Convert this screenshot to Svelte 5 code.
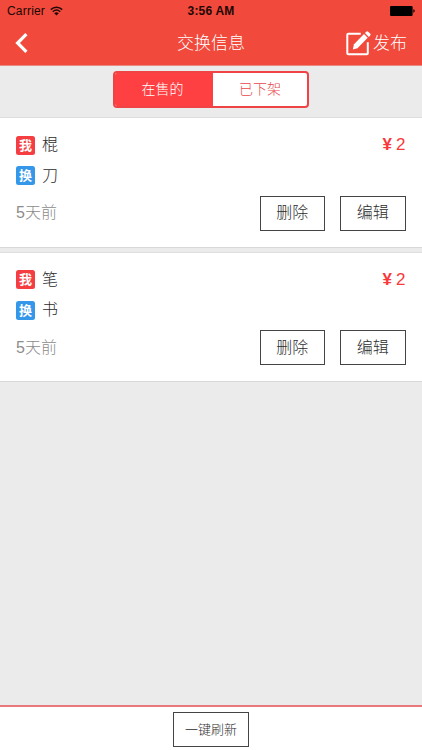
<script>
	// VARIABLES

	let tabs = ["在售的", "已下架"];
	let active = 0;

	let items = [
		{ id: 1, mine: "棍", wanted: "刀", price: 2, createdAt: "5天前" },
		{ id: 2, mine: "笔", wanted: "书", price: 2, createdAt: "5天前" },
	];

	// FUNCTIONS

	function remove(id) {
		items = items.filter((item) => item.id !== id);
	}
</script>

<div class="screen">
	<header>
		<div class="status">
			<div class="carrier">
				<span>Carrier</span>
				<svg width="13" height="10" viewBox="0 0 13 10">
					<path
						d="M.8 3.6C4 .5 9 .5 12.2 3.6M2.8 5.7C5 3.7 8 3.7 10.2 5.7"
						fill="none"
						stroke="#200806"
						stroke-width="1.5"
					/>
					<path d="M4.2 7.2Q6.5 5.4 8.8 7.2L6.5 9.6Z" fill="#200806" />
				</svg>
			</div>
			<span class="time">3:56 AM</span>
			<div class="power">
				<svg width="25" height="10" viewBox="0 0 25 10">
					<rect width="22.6" height="10" rx="1.2" />
					<path d="M23.3 3.3Q24.7 3.6 24.7 5T23.3 6.7Z" />
				</svg>
			</div>
		</div>
		<nav>
			<button class="back" aria-label="返回">
				<svg width="13" height="20" viewBox="0 0 13 20">
					<path d="M11.4 1.2L2.6 10L11.4 18.8" fill="none" stroke="#fff" stroke-width="3.2" />
				</svg>
			</button>
			<h1>交换信息</h1>
			<button class="publish">
				<svg width="26" height="25" viewBox="0 0 26 25">
					<path
						d="M14.8 2.8H2.3Q1.3 2.8 1.3 3.8V22.2Q1.3 23.2 2.3 23.2H20.8Q21.8 23.2 21.8 22.2V11.3"
						fill="none"
						stroke="#fff"
						stroke-width="2"
					/>
					<path d="M18 3L21.7 6.8L11.5 17.2L6.8 18.6L8 13.2Z" fill="#fff" />
					<path
						d="M19 2L20.2 .8Q21.3 -.1 22.5 .9L24.1 2.5Q25.1 3.6 24.1 4.7L22.8 5.9Z"
						fill="#fff"
					/>
				</svg>
				<span>发布</span>
			</button>
		</nav>
	</header>

	<div class="tabs">
		{#each tabs as tab, i}
			<button class:active={active === i} on:click={() => (active = i)}>{tab}</button>
		{/each}
	</div>

	<main>
		{#each items as item (item.id)}
			<section class="card">
				<div class="row">
					<i class="tag mine">我</i>
					<span class="name">{item.mine}</span>
					<span class="price"><b>¥</b>{item.price}</span>
				</div>
				<div class="row">
					<i class="tag wanted">换</i>
					<span class="name">{item.wanted}</span>
				</div>
				<div class="row footer">
					<span class="created-at">{item.createdAt}</span>
					<button on:click={() => remove(item.id)}>删除</button>
					<button>编辑</button>
				</div>
			</section>
		{/each}
	</main>

	<footer>
		<button>一键刷新</button>
	</footer>
</div>

<style>
	:global(body) {
		margin: 0;
	}

	.screen {
		height: 750px;
		display: flex;
		flex-direction: column;
		box-sizing: border-box;
		background: #ebebeb;
		color: #2c2c2c;
		font-family: "Liberation Sans", "Noto Sans CJK SC", sans-serif;
		font-weight: 300;
	}

	.screen * {
		box-sizing: border-box;
	}

	button {
		padding: 0;
		border: 0;
		background: none;
		color: inherit;
		font: inherit;
		white-space: nowrap;
	}

	svg {
		display: block;
		overflow: visible;
	}

	header {
		height: 66px;
		background: #f1493b;
		border-bottom: 1px solid #e88a82;
		color: #fff;
	}

	.status {
		height: 22px;
		display: grid;
		grid-template-columns: 1fr auto 1fr;
		align-items: center;
		padding: 0 7px 0 7px;
		color: #200806;
		font-size: 12px;
		line-height: 22px;
	}

	.carrier {
		display: flex;
		align-items: center;
		gap: 5px;
		letter-spacing: 0.2px;
	}

	.time {
		font-weight: bold;
		letter-spacing: 0.2px;
	}

	.power {
		justify-self: end;
		fill: #000;
	}

	nav {
		height: 42px;
		display: grid;
		grid-template-columns: 1fr auto 1fr;
		align-items: center;
		padding: 0 15px 0 15px;
	}

	.back {
		justify-self: start;
	}

	h1 {
		margin: 0;
		padding-top: 2px;
		font-size: 17px;
		font-weight: 300;
		line-height: 24px;
	}

	.publish {
		justify-self: end;
		display: flex;
		align-items: center;
		gap: 1px;
		font-size: 17px;
		line-height: 24px;
	}

	.publish span {
		padding-top: 2px;
	}

	.tabs {
		display: flex;
		width: 196px;
		height: 37px;
		margin: 5px auto 9px;
		overflow: hidden;
		flex: none;
		border: 2px solid #f04345;
		border-radius: 4px;
		background: #fff;
	}

	.tabs button {
		width: 94px;
		color: #e8474a;
		font-size: 14px;
		line-height: 33px;
	}

	.tabs button.active {
		width: 98px;
		padding-right: 3px;
		background: #ff4042;
		color: #fff;
	}

	main {
		flex: 1;
		display: flex;
		flex-direction: column;
		gap: 4px;
	}

	.card {
		height: 130.5px;
		padding: 12px 16.5px 0 16px;
		border-top: 1px solid #dedede;
		border-bottom: 1px solid #d8d8d8;
		background: #fff;
	}

	.row {
		display: flex;
		align-items: center;
		height: 30.5px;
	}

	.tag {
		width: 19px;
		height: 19px;
		margin-right: 7px;
		border-radius: 2.5px;
		color: #fff;
		font-size: 13px;
		font-style: normal;
		font-weight: bold;
		line-height: 19px;
		text-align: center;
	}

	.mine {
		background: #f43e42;
	}

	.wanted {
		background: #3597ea;
	}

	.name {
		font-size: 16px;
		line-height: 24px;
	}

	.price {
		display: flex;
		gap: 4px;
		margin-left: auto;
		color: #f8393c;
		font-size: 17px;
		line-height: 24px;
	}

	.price b {
		font-weight: bold;
	}

	.footer {
		height: 34.5px;
		margin-top: 5px;
		gap: 15px;
	}

	.created-at {
		margin-right: auto;
		color: #8c8c8c;
		font-size: 16px;
		line-height: 24px;
	}

	.footer button {
		width: 65.5px;
		height: 35px;
		border: 1px solid #444;
		font-size: 16px;
		line-height: 32px;
	}

	footer {
		height: 45px;
		display: flex;
		justify-content: center;
		padding-top: 5px;
		border-top: 2px solid #e8787b;
		background: #fff;
	}

	footer button {
		width: 76px;
		height: 35px;
		border: 1px solid #444;
		font-size: 13px;
		line-height: 31px;
	}
</style>
